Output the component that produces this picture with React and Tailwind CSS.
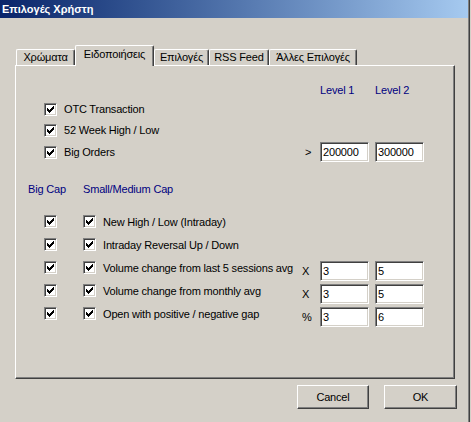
import React from 'react'

// [x, width] pairs per row y of the classic 7x7 check mark
const CHECK = [
  { y: 0, segs: [[6, 1]] },
  { y: 1, segs: [[5, 2]] },
  { y: 2, segs: [[0, 1], [4, 3]] },
  { y: 3, segs: [[0, 2], [3, 3]] },
  { y: 4, segs: [[0, 5]] },
  { y: 5, segs: [[1, 3]] },
  { y: 6, segs: [[2, 1]] },
]

function Checkbox() {
  return (
    <span className="relative block w-[13px] h-[13px] shrink-0 bg-white border border-t-[#808080] border-l-[#808080] border-b-white border-r-white shadow-[inset_1px_1px_#404040,inset_-1px_-1px_#D4D0C8]">
      <svg className="absolute left-0 top-0" width="11" height="11" viewBox="0 0 11 11" shapeRendering="crispEdges">
        {CHECK.map(r => r.segs.map(([x, w]) => (
          <rect key={`${r.y}-${x}`} x={x + 2} y={r.y + 2} width={w} height="1" fill="#000" />
        )))}
      </svg>
    </span>
  )
}

function Field({ value }) {
  return (
    <div className="w-[49px] h-[20px] shrink-0 bg-white border border-t-[#808080] border-l-[#808080] border-b-white border-r-white shadow-[inset_1px_1px_#404040,inset_-1px_-1px_#D4D0C8] pl-[2px] leading-[18px] text-black">
      {value}
    </div>
  )
}

function Tab({ label, active, w }) {
  if (active) {
    return (
      <div className={`${w} relative z-10 h-[21px] -mb-px bg-[#D4D0C8] border-l border-t border-r border-l-white border-t-white border-r-[#404040] shadow-[inset_-1px_0_#808080] rounded-t-[2px] flex items-center justify-center pb-[3px]`}>
        {label}
      </div>
    )
  }
  return (
    <div className={`${w} h-[16px] border-l border-t border-r border-l-white border-t-white border-r-[#404040] shadow-[inset_-1px_0_#808080] rounded-t-[2px] flex items-center justify-center`}>
      {label}
    </div>
  )
}

const LOWER = [
  { label: 'New High / Low (Intraday)' },
  { label: 'Intraday Reversal Up / Down' },
  { label: 'Volume change from last 5 sessions avg', sym: 'X', a: '3', b: '5' },
  { label: 'Volume change from monthly avg', sym: 'X', a: '3', b: '5' },
  { label: 'Open with positive / negative gap', sym: '%', a: '3', b: '6' },
]

export default function App() {
  return (
    <div className="w-[471px] h-[422px] bg-[#D4D0C8] flex font-['Liberation_Sans',Arial,sans-serif] text-[11px] tracking-[-0.18px] text-black overflow-hidden">
      <div className="w-[468px] flex flex-col">
        {/* title bar */}
        <div className="h-[18px] bg-linear-to-r from-[#0A246A] to-[#A6CAF0] pl-[2px] leading-[18px] text-white font-bold tracking-normal">
          Επιλογές Χρήστη
        </div>

        <div className="pt-[27px] pl-[15px]">
          {/* tabs */}
          <div className="flex items-end h-[20px] pl-px">
            <Tab w="w-[59px]" label="Χρώματα" />
            <Tab w="w-[79px]" label="Ειδοποιήσεις" active />
            <Tab w="w-[55px]" label="Επιλογές" />
            <Tab w="w-[60px]" label="RSS Feed" />
            <Tab w="w-[88px]" label="Άλλες Επιλογές" />
          </div>

          {/* panel */}
          <div className="w-[440px] h-[314px] border border-l-white border-t-white border-r-[#404040] border-b-[#404040] shadow-[inset_-1px_-1px_#808080] flex flex-col">
            <div className="pt-[18px] pl-[304px] flex h-[31px] leading-[13px] text-[#000080]">
              <span className="w-[55px]">Level 1</span>
              <span>Level 2</span>
            </div>

            <div className="mt-[6px] pl-[28px] flex items-center h-[13px]">
              <Checkbox />
              <span className="ml-[7px]">OTC Transaction</span>
            </div>
            <div className="mt-[8px] pl-[28px] flex items-center h-[13px]">
              <Checkbox />
              <span className="ml-[7px]">52 Week High / Low</span>
            </div>
            <div className="mt-[5px] pl-[28px] flex items-center h-[20px]">
              <Checkbox />
              <span className="ml-[7px] w-[241px]">Big Orders</span>
              <span className="w-[15px]">&gt;</span>
              <Field value="200000" />
              <div className="ml-[6px]"><Field value="300000" /></div>
            </div>

            <div className="mt-[21px] pl-[12px] flex h-[13px] leading-[13px] text-[#000080]">
              <span className="w-[55px]">Big Cap</span>
              <span>Small/Medium Cap</span>
            </div>

            <div className="mt-[19px] flex flex-col">
              {LOWER.map(r => (
                <div key={r.label} className="h-[23px] pl-[28px] flex items-start">
                  <Checkbox />
                  <div className="ml-[26px]"><Checkbox /></div>
                  <span className="ml-[7px] w-[199px] whitespace-nowrap leading-[15px]">{r.label}</span>
                  {r.sym && (
                    <>
                      <span className="w-[18px] leading-[20px]">{r.sym}</span>
                      <Field value={r.a} />
                      <div className="ml-[6px]"><Field value={r.b} /></div>
                    </>
                  )}
                </div>
              ))}
            </div>
          </div>

          {/* buttons */}
          <div className="mt-[6px] pl-[282px] flex gap-[15px]">
            <button className="w-[72px] h-[24px] border border-l-white border-t-white border-r-[#404040] border-b-[#404040] shadow-[inset_-1px_-1px_#808080] bg-[#D4D0C8]">
              Cancel
            </button>
            <button className="w-[73px] h-[24px] border border-l-white border-t-white border-r-[#404040] border-b-[#404040] shadow-[inset_-1px_-1px_#808080] bg-[#D4D0C8]">
              OK
            </button>
          </div>
        </div>
      </div>
      <div className="w-px bg-[#808080]" />
      <div className="w-px bg-[#404040]" />
      <div className="w-px" />
    </div>
  )
}
